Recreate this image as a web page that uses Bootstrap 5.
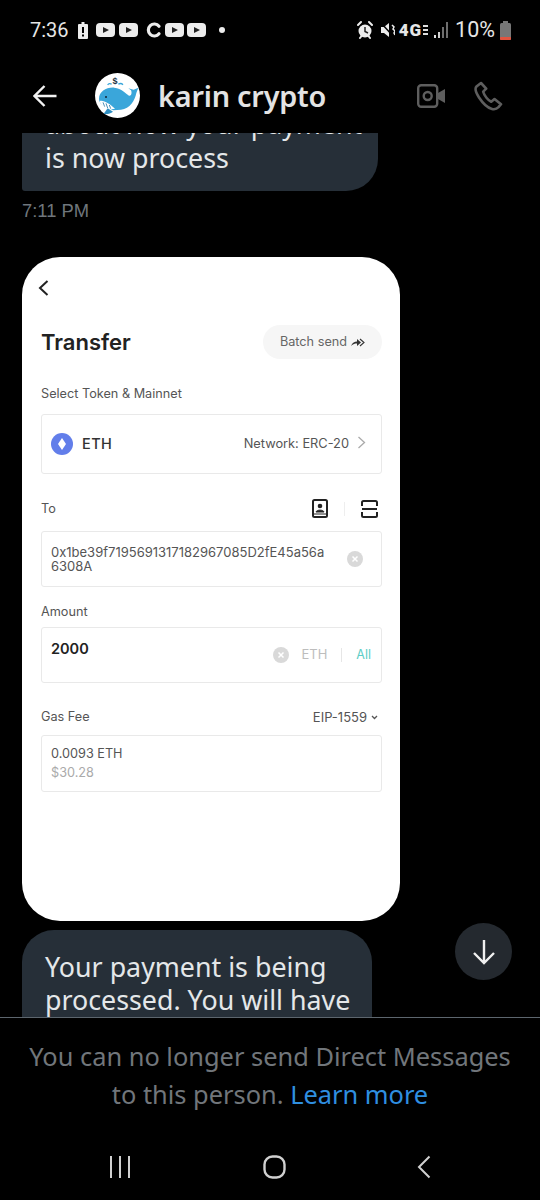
<!DOCTYPE html>
<html lang="en">
<head>
    <meta charset="UTF-8">
    <meta name="viewport" content="width=device-width, initial-scale=1">
    <title>karin crypto</title>
    <link href="https://cdn.jsdelivr.net/npm/bootstrap@5.3.0/dist/css/bootstrap.min.css" rel="stylesheet">
    <style>
        html, body { background: #000; }
        .phone { width: 540px; height: 1200px; background: #000; font-family: "Noto Sans", sans-serif; }

        /* status bar */
        .status-row { height: 60px; padding: 0 28px 0 30px; color: #e6e6e6; font-family: Roboto, sans-serif; }
        .status-time { font-size: 20px; line-height: 1; width: 47px; }
        .status-pct { font-size: 21.5px; line-height: 1; }
        .net-text { font-size: 17px; font-weight: 900; line-height: 1; letter-spacing: 1px; }
        .signal-gap { margin-right: 5px; }

        /* chat header */
        .chat-head { height: 73px; padding: 0 37px 2px 33px; }
        .avatar-pic { margin-left: 14px; }
        .chat-name { font-family: "Noto Sans", sans-serif; font-size: 28.8px; font-weight: 600; color: #e3e3e3; margin-left: 18px; letter-spacing: -.2px; }
        .head-video { margin-right: 29px; }

        /* messages */
        .msg-area { height: 884px; overflow: hidden; padding-left: 22px; }
        .bubble { background: #262f38; color: #e4e7e9; font-size: 26.8px; line-height: 33px; padding-left: 23px; }
        .bubble-top { width: 356px; height: 93px; margin-top: -35px; padding-top: 8.500px; line-height: 34px; border-radius: 0 0 32px 3px; }
        .bubble-next { width: 350px; margin-top: 9px; padding: 20px 15px 40px 23px; border-radius: 32px 32px 0 0; }
        .msg-time { color: #6f767c; font-size: 18.400px; line-height: 24px; margin: 8px 0 34px; font-family: "Liberation Sans", sans-serif; }

        /* screenshot inside the chat */
        .shot { width: 378px; height: 664px; background: #fff; border-radius: 38px; padding: 0 18px 0 19px; font-family: Inter, sans-serif; color: #555; font-size: 12.700px; }
        .shot-back { height: 68px; padding-top: 23px; }
        .shot-back svg { margin-left: -3px; }
        .shot-title { height: 34px; margin-bottom: 27px; }
        .shot-title h1 { font-family: Inter, sans-serif; font-size: 22px; font-weight: 600; color: #222; margin: 0; }
        .batch-pill { width: 119px; height: 34px; background: #f6f6f6; border-radius: 17px; color: #666; font-size: 12.700px; }
        .shot-label { line-height: 16px; }
        .field-box { border: 1px solid #e9e9e9; border-radius: 3px; padding-left: 9px; padding-right: 10px; }
        .box-eth { height: 60px; margin-top: 12px; margin-bottom: 25px; padding-right: 15px; }
        .box-addr { height: 56px; margin-top: 13px; margin-bottom: 17px; line-height: 14px; font-size: 13px; }
        .box-amount { height: 56px; margin-top: 7px; margin-bottom: 26px; }
        .box-gas { height: 57px; margin-top: 10px; padding-bottom: 2px; line-height: 19px; }
        .eth-mark { width: 22px; height: 22px; }
        .eth-name { font-size: 14.500px; font-weight: 500; color: #333; margin-left: 9px; letter-spacing: .4px; }
        .net-label { font-size: 12.800px; }
        .amount-val { font-size: 14.500px; font-weight: 600; color: #222; margin-top: -12px; }
        .unit-grey { color: #bdbdbd; font-size: 13px; }
        .unit-all { color: #5ccdc6; font-size: 12.500px; }
        .unit-sep { width: 1px; height: 14px; background: #e6e6e6; margin: 0 14px; }
        .muted-usd { color: #aaa; }
        .icons-sep { width: 1px; height: 14px; background: #eee; margin: 0 16px; }
        .eip-label { font-size: 13px; }

        /* scroll down button */
        .msg-wrap { position: relative; }
        .scroll-btn { position: absolute; left: 455px; top: 790px; width: 57px; height: 57px; border-radius: 50%; background: #24292f; }

        /* footer */
        .blocked-bar { height: 183px; border-top: 1px solid #5d666e; padding-top: 19px; }
        .blocked-text { color: #71767b; font-size: 25.400px; line-height: 38px; text-align: center; margin: 0; }
        .blocked-text a { color: #2f8fe0; text-decoration: none; }
        .nav-row { margin-top: 42px; padding: 0 109px; }
    </style>
</head>
<body class="m-0">

<div class="phone d-flex flex-column overflow-hidden">

    <!-- barra de estado -->
    <div class="status-row d-flex align-items-center justify-content-between">
        <div class="d-flex align-items-center">
            <span class="status-time">7:36</span>
            <svg width="150" height="20" viewBox="0 0 150 20">
                <g fill="#ececec">
                    <path d="M2 4h2.500V2h3v2H10a1 1 0 0 1 1 1v13a1 1 0 0 1-1 1H2a1 1 0 0 1-1-1V5a1 1 0 0 1 1-1z"/>
                    <rect x="19" y="3" width="19" height="14" rx="4"/>
                    <rect x="42" y="3" width="19" height="14" rx="4"/>
                    <rect x="88" y="3" width="19" height="14" rx="4"/>
                    <rect x="110" y="3" width="19" height="14" rx="4"/>
                    <circle cx="145" cy="10" r="3"/>
                </g>
                <rect x="5" y="7" width="2" height="6" fill="#000"/>
                <rect x="5" y="14.500" width="2" height="2" fill="#000"/>
                <path d="M26 7l6 3-6 3zM49 7l6 3-6 3zM95 7l6 3-6 3zM117 7l6 3-6 3z" fill="#222"/>
                <path d="M82 6.200a6 6 0 1 0 0 7.600" fill="none" stroke="#ececec" stroke-width="3.200" stroke-linecap="round"/>
            </svg>
        </div>
        <div class="d-flex align-items-center">
            <svg width="38" height="20" viewBox="0 0 38 20">
                <circle cx="8" cy="11" r="6.500" fill="#ececec"/>
                <path d="M1 5l3-3M15 5l-3-3M3 18l1.500-2M13 18l-1.500-2" stroke="#ececec" stroke-width="2" stroke-linecap="round"/>
                <path d="M8 7v4.500l3 1.500" stroke="#222" stroke-width="1.500" fill="none"/>
                <path d="M24 7h3l5-4v14l-5-4h-3z" fill="#ececec"/>
                <path d="M24 3l13 14" stroke="#000" stroke-width="1.500"/>
                <path d="M35 5l2 2-1 2 2 2-1 2 1 2" stroke="#ececec" stroke-width="1.500" fill="none"/>
            </svg>
            <span class="net-text ms-1">4G</span>
            <svg width="8" height="14" viewBox="0 0 8 14" class="me-1"><path d="M1 3h5M1 7h5M1 11h5" stroke="#ddd" stroke-width="2"/></svg>
            <svg width="16" height="18" viewBox="0 0 16 18" class="signal-gap">
                <rect x="0" y="14" width="2" height="3" fill="#e0e0e0"/>
                <rect x="4" y="11" width="2" height="6" fill="#d0d0d0"/>
                <rect x="8" y="6" width="2" height="11" fill="#6e6e6e"/>
                <rect x="12" y="1" width="2" height="16" fill="#6e6e6e"/>
            </svg>
            <span class="status-pct">10%</span>
            <svg width="13" height="21" viewBox="0 0 13 21" class="ms-1">
                <rect x="4" y="1" width="5" height="2" fill="#777"/>
                <rect x="1" y="3" width="11" height="17" rx="1.500" fill="#777"/>
                <rect x="1" y="17" width="11" height="3" rx="1" fill="#e2543f"/>
            </svg>
        </div>
    </div>

    <!-- encabezado del chat -->
    <div class="chat-head d-flex align-items-center">
        <svg width="24" height="24" viewBox="0 0 24 24" class="me-4 flex-shrink-0">
            <path d="M23.500 12H2M11.500 2L1.500 12l10 10" fill="none" stroke="#f2f2f2" stroke-width="2.400"/>
        </svg>
        <svg width="45" height="45" viewBox="0 0 135 135" class="avatar-pic flex-shrink-0">
            <circle cx="67.500" cy="67.500" r="67.500" fill="#fff"/>
            <path d="M12 78C12 55 35 42 58 44c22 2 34 18 44 24 6 2 10-6 6-16l-8-6 16 4 14-6-6 16c-4 22-19 48-46 50l-23 2-25-12C18 95 12 88 12 78z" fill="#3aa6da"/>
            <path d="M14 84c11-4 31 8 46 24H45C28 104 16 96 14 84z" fill="#fff"/>
            <path d="M24 88l5 13M33 91l5 14M43 96l4 11" stroke="#2b7aa8" stroke-width="2.500"/>
            <path d="M26 122l12-16 16 10c-8 6-20 9-28 6z" fill="#2f8fc2"/>
            <circle cx="33" cy="72" r="3" fill="#123"/>
            <text x="60" y="32" font-family="'Liberation Sans', sans-serif" font-size="27" font-weight="700" text-anchor="middle" fill="#1d3346">$</text>
            <path d="M38 36c3-5 8-5 12-2M70 34c5-4 10-3 14 1" fill="none" stroke="#3aa6da" stroke-width="4"/>
        </svg>
        <span class="chat-name">karin crypto</span>
        <div class="ms-auto d-flex align-items-center">
            <svg width="28" height="24" viewBox="0 0 28 24" class="head-video">
                <rect x="1.200" y="1.200" width="19" height="21.600" rx="3" fill="none" stroke="#5e5e5e" stroke-width="2.400"/>
                <circle cx="10.700" cy="12" r="4" fill="none" stroke="#5e5e5e" stroke-width="2.400"/>
                <path d="M21 9l7-4v14l-7-4z" fill="#5e5e5e"/>
            </svg>
            <svg width="29" height="30" viewBox="0 0 29 30">
                <path d="M7 2L2.500 5.500C1 7 1.500 11 5 16.500c4 6 9 10.500 13 11.500 3 .8 5-.2 6.500-1.800l2.500-3-6.500-5.200-3.300 2.700c-3-1.300-7-6-8-10l3-3z" fill="none" stroke="#5e5e5e" stroke-width="2.600" stroke-linejoin="round"/>
            </svg>
        </div>
    </div>

    <!-- mensajes -->
    <div class="msg-wrap">
        <div class="msg-area">
            <div class="bubble bubble-top">about how your payment<br>is now process</div>
            <div class="msg-time">7:11 PM</div>

            <div class="shot">
                <div class="shot-back">
                    <svg width="11" height="16" viewBox="0 0 11 16" class="d-block"><path d="M9.500 1L2 8l7.500 7" fill="none" stroke="#222" stroke-width="2"/></svg>
                </div>
                <div class="shot-title d-flex align-items-center justify-content-between">
                    <h1>Transfer</h1>
                    <div class="batch-pill d-flex align-items-center justify-content-center">
                        Batch send
                        <svg width="14" height="9" viewBox="0 0 14 9" class="ms-1"><path d="M0 8c1.500-3.500 3.500-4.500 6-4.500V1l4 3.500L6 8V5.500C4 5.500 2 6 0 8z" fill="#333"/><path d="M9 1l4 3.500L9 8" fill="none" stroke="#333" stroke-width="1.100"/></svg>
                    </div>
                </div>
                <div class="shot-label">Select Token &amp; Mainnet</div>
                <div class="field-box box-eth d-flex align-items-center">
                    <svg class="eth-mark" viewBox="0 0 22 22">
                        <circle cx="11" cy="11" r="11" fill="#627eea"/>
                        <path d="M11 5l4 6-4 6-4-6z" fill="#fff"/>
                    </svg>
                    <span class="eth-name">ETH</span>
                    <span class="ms-auto net-label">Network: ERC-20</span>
                    <svg width="9" height="13" viewBox="0 0 9 13" class="ms-2 mb-1"><path d="M1.500 1l6 5.500-6 5.500" fill="none" stroke="#aaa" stroke-width="1.300"/></svg>
                </div>
                <div class="d-flex align-items-center justify-content-between shot-label">
                    <span>To</span>
                    <span class="d-flex align-items-center me-1">
                        <svg width="16" height="19" viewBox="0 0 16 19">
                            <rect x="1" y="1" width="14" height="17" rx="1.500" fill="none" stroke="#222" stroke-width="2"/>
                            <circle cx="8" cy="7" r="2.300" fill="#222"/>
                            <path d="M4 13c.5-2.500 7.500-2.500 8 0zM1 15h14" fill="#222" stroke="#222"/>
                        </svg>
                        <span class="icons-sep"></span>
                        <svg width="17" height="18" viewBox="0 0 17 18">
                            <path d="M1 6V2.500A1.500 1.500 0 0 1 2.500 1h12A1.500 1.500 0 0 1 16 2.500V6M1 9h15M1 12v3.500A1.500 1.500 0 0 0 2.500 17h12a1.500 1.500 0 0 0 1.500-1.500V12" fill="none" stroke="#222" stroke-width="2"/>
                        </svg>
                    </span>
                </div>
                <div class="field-box box-addr d-flex align-items-center justify-content-between">
                    <span>0x1be39f7195691317182967085D2fE45a56a<br>6308A</span>
                    <svg width="16" height="16" viewBox="0 0 16 16" class="flex-shrink-0 me-2"><circle cx="8" cy="8" r="8" fill="#d9d9d9"/><path d="M5.500 5.500l5 5M10.500 5.500l-5 5" stroke="#fff" stroke-width="1.500"/></svg>
                </div>
                <div class="shot-label">Amount</div>
                <div class="field-box box-amount d-flex align-items-center">
                    <span class="amount-val">2000</span>
                    <svg width="16" height="16" viewBox="0 0 16 16" class="ms-auto"><circle cx="8" cy="8" r="8" fill="#d9d9d9"/><path d="M5.500 5.500l5 5M10.500 5.500l-5 5" stroke="#fff" stroke-width="1.500"/></svg>
                    <span class="unit-grey ms-2 ps-1">ETH</span>
                    <span class="unit-sep"></span>
                    <span class="unit-all">All</span>
                </div>
                <div class="d-flex align-items-center justify-content-between shot-label">
                    <span>Gas Fee</span>
                    <span class="d-flex align-items-center eip-label">EIP-1559
                        <svg width="7" height="5" viewBox="0 0 7 5" class="ms-1 me-1"><path d="M1 1l2.500 2.500L6 1" fill="none" stroke="#555" stroke-width="1.300"/></svg>
                    </span>
                </div>
                <div class="field-box box-gas d-flex flex-column justify-content-center">
                    <span>0.0093 ETH</span>
                    <span class="muted-usd">$30.28</span>
                </div>
            </div>

            <div class="bubble bubble-next">Your payment is being processed. You will have</div>
        </div>
        <div class="scroll-btn d-flex align-items-center justify-content-center">
            <svg width="24" height="26" viewBox="0 0 24 26"><path d="M12 1v23M2 14l10 10 10-10" fill="none" stroke="#f0f0f0" stroke-width="2.400"/></svg>
        </div>
    </div>

    <!-- aviso y navegacion -->
    <div class="blocked-bar">
        <p class="blocked-text">You can no longer send Direct Messages<br>to this person. <a href="#">Learn more</a></p>
        <div class="nav-row d-flex align-items-center justify-content-between">
            <svg width="22" height="24" viewBox="0 0 22 24"><path d="M2 1v22M11 1v22M20 1v22" stroke="#d0d0d0" stroke-width="2"/></svg>
            <svg width="23" height="24" viewBox="0 0 23 24"><rect x="1.500" y="1.500" width="20" height="21" rx="8" fill="none" stroke="#d0d0d0" stroke-width="2.400"/></svg>
            <svg width="14" height="24" viewBox="0 0 14 24"><path d="M12.500 1.500L2 12l10.500 10.500" fill="none" stroke="#d0d0d0" stroke-width="2"/></svg>
        </div>
    </div>

</div>

<script src="https://cdn.jsdelivr.net/npm/bootstrap@5.3.0/dist/js/bootstrap.bundle.min.js"></script>
</body>
</html>
